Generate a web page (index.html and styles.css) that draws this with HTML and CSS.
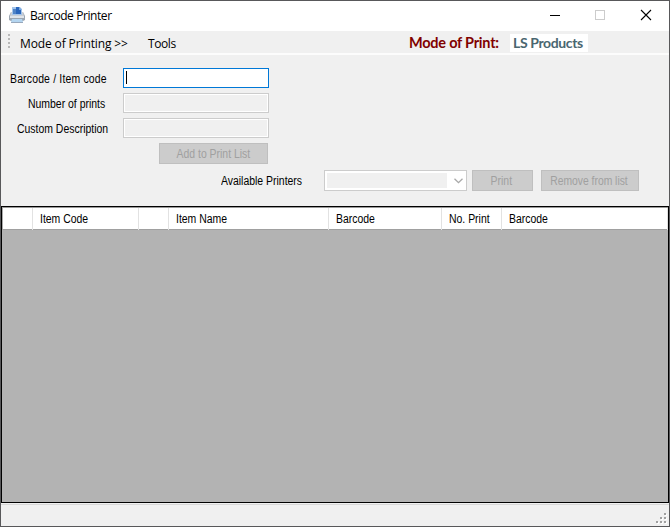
FILE: index.html
```html
<!DOCTYPE html>
<html lang="en">
<head>
<meta charset="utf-8">
<title>Barcode Printer</title>
<link rel="stylesheet" href="styles.css">
</head>
<body>
<div class="window">
  <header class="titlebar">
    <svg class="app-icon" width="16" height="16" viewBox="0 0 16 16">
      <path d="M2 5h12l2 4v4l-2 1H2l-2-1V9z" fill="#9ba5b1"/>
      <path d="M2 5h12l1 4v1H1V9z" fill="#c9ced5"/>
      <path d="M3 0h8l2 2v6H3z" fill="#a3c4ea"/>
      <path d="M4 2h8v5H4z" fill="#4f83c6"/>
      <path d="M7 0h3l2 3v4H7z" fill="#2a66bc"/>
      <path d="M10 0l3 3h-3z" fill="#78a8e0"/>
      <path d="M1 9h14v2H1z" fill="#dfe4ea"/>
      <path d="M3 12h10l1 3H2z" fill="#b4d5f0"/>
      <path d="M2 15h12v1H2z" fill="#98a8bc"/>
    </svg>
    <h1 class="title"><span>Barcode Printer</span></h1>
    <svg class="controls" width="120" height="30" viewBox="0 0 120 30" fill="none" shape-rendering="crispEdges">
      <path d="M0 14.5h10" stroke="#000"/>
      <path d="M45.5 9.5h9v9h-9z" stroke="#ccc"/>
      <path d="M91 9l10 10M101 9L91 19" stroke="#000" shape-rendering="auto" stroke-width="1.1"/>
    </svg>
  </header>
  <nav class="menubar">
    <svg class="grip" width="3" height="15" viewBox="0 0 3 15" fill="#b8b8b8"><path d="M0 0h2v2H0zM0 4h2v2H0zM0 8h2v2H0zM0 12h2v2H0z"/></svg>
    <span class="menu-item menu-mode">Mode of Printing &gt;&gt;</span>
    <span class="menu-item menu-tools">Tools</span>
    <span class="mode-label">Mode of Print:</span>
    <span class="mode-value">LS Products</span>
  </nav>
  <main class="form">
    <div class="field"><label class="l-code"><span class="t">Barcode / Item code</span></label><div class="input active"><i class="caret"></i></div></div>
    <div class="field"><label class="l-count"><span class="t">Number of prints</span></label><div class="input"></div></div>
    <div class="field"><label class="l-desc"><span class="t">Custom Description</span></label><div class="input"></div></div>
    <button class="btn add" disabled><span class="t">Add to Print List</span></button>
    <div class="printer-row">
      <label class="l-printers"><span class="t">Available Printers</span></label>
      <div class="combo"><div class="combo-value"></div>
        <svg width="9" height="6" viewBox="0 0 9 6"><path d="M.5 .7l4 4 4-4" fill="none" stroke="#a8a8a8" stroke-width="1.3"/></svg>
      </div>
      <button class="btn print" disabled><span class="t">Print</span></button>
      <button class="btn remove" disabled><span class="t">Remove from list</span></button>
    </div>
  </main>
  <section class="grid">
    <div class="grid-head">
      <div class="cell"></div>
      <div class="cell"><span class="t">Item Code</span></div>
      <div class="cell"></div>
      <div class="cell"><span class="t">Item Name</span></div>
      <div class="cell"><span class="t">Barcode</span></div>
      <div class="cell"><span class="t">No. Print</span></div>
      <div class="cell"><span class="t">Barcode</span></div>
    </div>
  </section>
  <footer class="status">
    <svg width="11" height="11" viewBox="0 0 11 11">
      <path d="M9 1h2v2H9zM5 5h2v2H5zM9 5h2v2H9zM1 9h2v2H1zM5 9h2v2H5zM9 9h2v2H9z" fill="#fff"/>
      <path d="M8 0h2v2H8zM4 4h2v2H4zM8 4h2v2H8zM0 8h2v2H0zM4 8h2v2H4zM8 8h2v2H8z" fill="#a0a0a0"/>
    </svg>
  </footer>
</div>
</body>
</html>
```
FILE: styles.css
```css
* { box-sizing: border-box; }
body { margin: 0; overflow: hidden; }
.window {
  width: 670px; height: 527px;
  display: flex; flex-direction: column;
  border: 1px solid #58585a;
  background: #f0f0f0;
  font: 12px/16px "Liberation Sans", Arial, sans-serif;
  color: #000;
}
.t { display: inline-block; transform: scaleX(.87); transform-origin: 0 50%; white-space: nowrap; }

.titlebar { height: 30px; display: flex; background: #fff; padding-left: 8px; }
.app-icon { margin-top: 6px; }
.title { flex: 1; margin: 0 0 0 5px; font: 12px/30px "Open Sans", sans-serif; letter-spacing: -.42px; white-space: nowrap; }
.controls { margin-right: -1px; }

.menubar {
  height: 24px; display: flex; align-items: flex-start;
  padding-left: 7px; border-bottom: 2px solid #fcfcfc;
  font: 12px/25px "Open Sans", sans-serif; white-space: nowrap;
}
.grip { margin-top: 3px; }
.menu-item { letter-spacing: -.12px; }
.menu-mode { width: 128px; margin-left: 9px; }
.menu-tools { width: 261px; letter-spacing: -.4px; }
.mode-label, .mode-value { font: bold 14.5px/18px Lato, sans-serif; margin-top: 3px; }
.mode-label { width: 101px; color: #800000; letter-spacing: -.23px; line-height: 18px; }
.mode-value { width: 78px; height: 18px; padding-left: 3px; background: #fff; color: #4a6670; font-size: 14px; letter-spacing: -.37px; line-height: 18px; }

.form { height: 151px; padding-top: 13px; }
.field { display: flex; height: 20px; margin-bottom: 5px; }
.field label { width: 122px; line-height: 22px; }
.l-code { padding-left: 9px; }
.l-code .t { letter-spacing: .2px; }
.l-count { padding-left: 27px; }
.l-desc { padding-left: 16px; }
.input { width: 146px; height: 20px; border: 1px solid #ccc; box-shadow: inset 0 0 0 1px #fff; }
.input.active { border-color: #0078d7; background: #fff; padding: 2px; }
.caret { display: block; width: 1px; height: 13px; background: #000; }
.btn {
  display: flex; justify-content: center; align-items: center;
  height: 21px; padding: 0; border: 1px solid #bfbfbf; border-radius: 0;
  background: #ccc; color: #a0a0a0;
  font: 12px/16px "Liberation Sans", Arial, sans-serif;
}
.btn .t { transform-origin: 50% 50%; }
.add { width: 109px; margin-left: 158px; }
.add .t { margin-right: 1px; }
.printer-row { display: flex; margin-top: 6px; }
.l-printers { width: 323px; padding-left: 220px; line-height: 22px; }
.combo { width: 143px; height: 21px; display: flex; align-items: center; border: 1px solid #ccc; background: #fff; padding-left: 2px; }
.combo-value { width: 120px; height: 15px; background: #f0f0f0; margin-right: 7px; }
.print { width: 61px; margin-left: 5px; }
.remove { width: 98px; margin-left: 8px; }
.remove .t { transform: scaleX(.86); margin-right: 2px; }
.print .t { margin-right: 3px; }

.grid { height: 297px; border: 1px solid #000; background: #b3b3b3; }
.grid-head {
  display: grid; grid-template-columns: 30px 106px 30px 160px 113px 60px 1fr;
  height: 23px; background: #fff;
  border-top: 1px solid #999; border-left: 1px solid #aaa; border-bottom: 1px solid #a0a0a0;
}
.cell { border-right: 1px solid #e2e2e2; padding-left: 7px; line-height: 22px; }

.status { flex: 1; display: flex; justify-content: flex-end; align-items: flex-end; padding: 0 2px 2px; box-shadow: inset 0 1px #f0f0f0, inset 0 2px #d7d7d7; }
```
